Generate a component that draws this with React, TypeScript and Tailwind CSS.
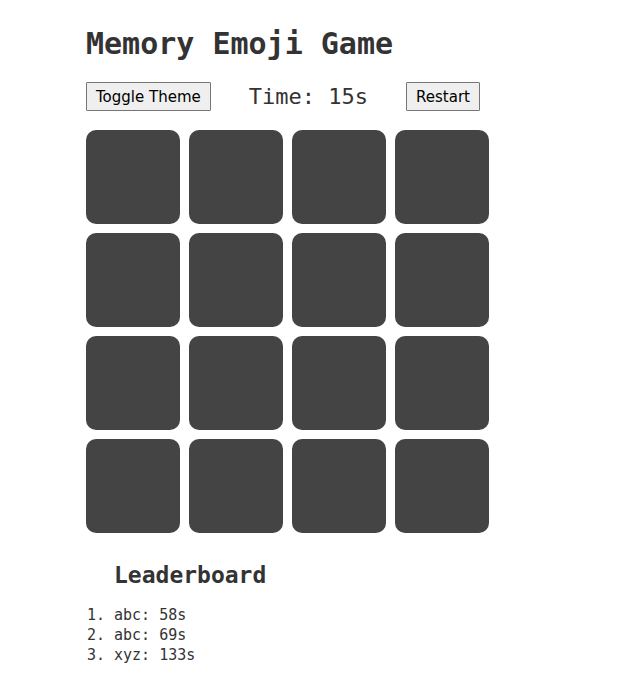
const cards = Array.from({ length: 16 }, (_, i) => i + 1);

const scores = [
  { name: "abc", time: 58 },
  { name: "abc", time: 69 },
  { name: "xyz", time: 133 },
];

const buttonClass =
  "h-[29px] rounded-[1px] border border-[#767676] bg-[#efefef] px-[9px] font-['DejaVu_Sans',sans-serif] text-[15px] leading-5 whitespace-nowrap text-black";

export default function App() {
  return (
    <main className="min-h-screen bg-white pt-6 pb-6 pl-[86px] font-['DejaVu_Sans_Mono',monospace] text-[#333]">
      <h1 className="text-[30px] leading-10 font-bold whitespace-nowrap">Memory Emoji Game</h1>
      <div className="mt-[18px] flex w-[394px] items-center justify-between">
        <button type="button" className={buttonClass}>Toggle Theme</button>
        <p className="text-[22px] leading-7">Time: 15s</p>
        <button type="button" className={buttonClass}>Restart</button>
      </div>
      <div className="mt-[19px] grid w-max grid-cols-4 gap-[9px]">
        {cards.map((card) => (
          <button
            key={card}
            type="button"
            aria-label={`Card ${card}`}
            className="size-[94px] rounded-[10px] bg-[#444]"
          />
        ))}
      </div>
      <section>
        <h2 className="mt-7 pl-7 text-[23px] leading-7 font-bold">Leaderboard</h2>
        <ol className="mt-4 list-decimal pl-7 text-[15px] leading-5">
          {scores.map((score, i) => (
            <li key={i}>{`${score.name}: ${score.time}s`}</li>
          ))}
        </ol>
      </section>
    </main>
  );
}
